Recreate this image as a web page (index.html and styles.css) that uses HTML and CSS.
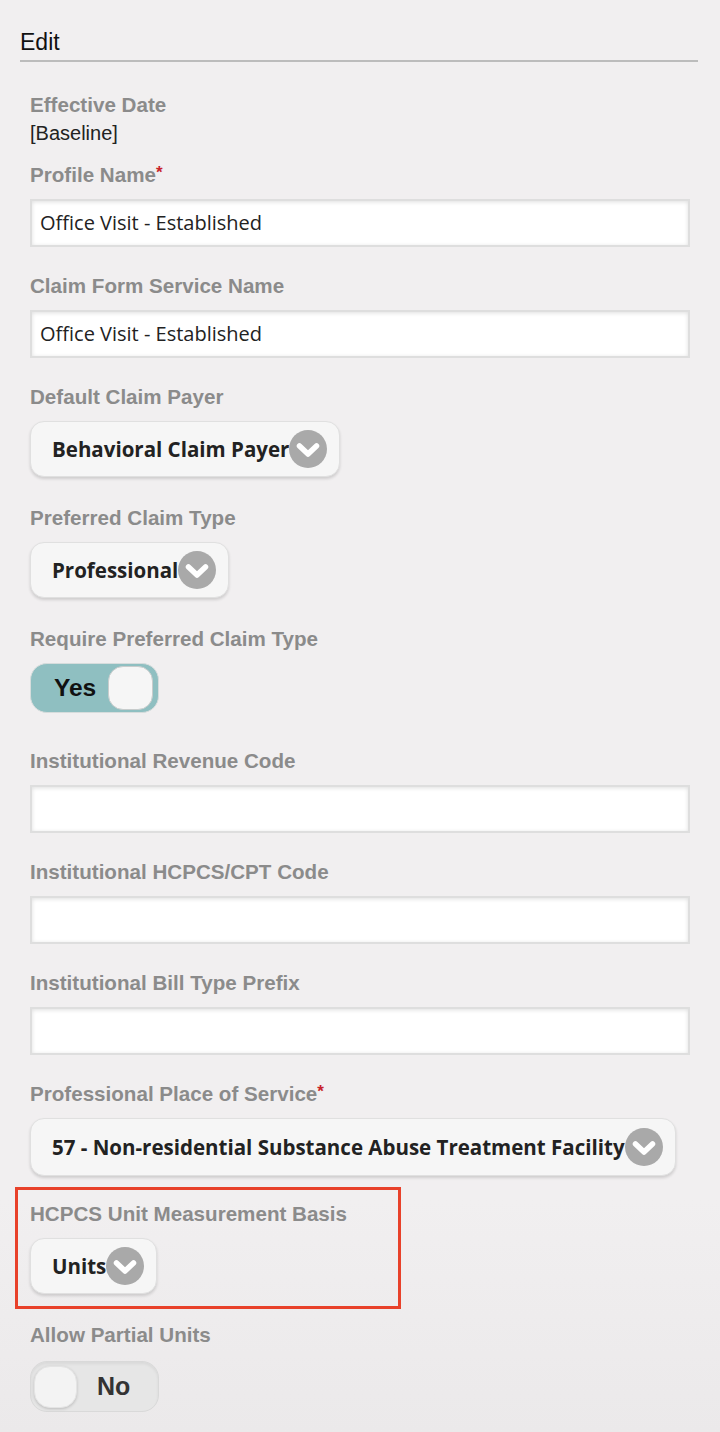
FILE: index.html
```html
<!DOCTYPE html>
<html lang="en">
<head>
<meta charset="utf-8">
<title>Edit</title>
<link rel="stylesheet" href="styles.css">
</head>
<body>
<div class="page">
  <div class="header">Edit</div>
  <div class="form">
    <div class="field field-static">
      <div class="label">Effective Date</div>
      <div class="static">[Baseline]</div>
    </div>

    <div class="field field-input">
      <div class="label">Profile Name<span class="req">*</span></div>
      <div class="input">Office Visit - Established</div>
    </div>

    <div class="field field-input">
      <div class="label">Claim Form Service Name</div>
      <div class="input">Office Visit - Established</div>
    </div>

    <div class="field field-select">
      <div class="label">Default Claim Payer</div>
      <div class="select"><span class="select-text">Behavioral Claim Payer</span><svg class="chev" viewBox="0 0 38 38" width="38" height="38"><circle cx="19" cy="19" r="19" fill="#a9a9a9"/><polyline points="10.5,16 19,24 27.5,16" fill="none" stroke="#fff" stroke-width="5.5" stroke-linecap="round" stroke-linejoin="round"/></svg></div>
    </div>

    <div class="field field-select">
      <div class="label">Preferred Claim Type</div>
      <div class="select"><span class="select-text">Professional</span><svg class="chev" viewBox="0 0 38 38" width="38" height="38"><circle cx="19" cy="19" r="19" fill="#a9a9a9"/><polyline points="10.5,16 19,24 27.5,16" fill="none" stroke="#fff" stroke-width="5.5" stroke-linecap="round" stroke-linejoin="round"/></svg></div>
    </div>

    <div class="field field-toggle">
      <div class="label">Require Preferred Claim Type</div>
      <div class="toggle toggle-on"><span class="toggle-text">Yes</span><span class="knob"></span></div>
    </div>

    <div class="field field-input">
      <div class="label">Institutional Revenue Code</div>
      <div class="input"></div>
    </div>

    <div class="field field-input">
      <div class="label">Institutional HCPCS/CPT Code</div>
      <div class="input"></div>
    </div>

    <div class="field field-input">
      <div class="label">Institutional Bill Type Prefix</div>
      <div class="input"></div>
    </div>

    <div class="field field-select field-pos">
      <div class="label">Professional Place of Service<span class="req">*</span></div>
      <div class="select select-tall"><span class="select-text">57 - Non-residential Substance Abuse Treatment Facility</span><svg class="chev" viewBox="0 0 38 38" width="38" height="38"><circle cx="19" cy="19" r="19" fill="#a9a9a9"/><polyline points="10.5,16 19,24 27.5,16" fill="none" stroke="#fff" stroke-width="5.5" stroke-linecap="round" stroke-linejoin="round"/></svg></div>
    </div>

    <div class="field field-select highlight">
      <div class="label">HCPCS Unit Measurement Basis</div>
      <div class="select"><span class="select-text">Units</span><svg class="chev" viewBox="0 0 38 38" width="38" height="38"><circle cx="19" cy="19" r="19" fill="#a9a9a9"/><polyline points="10.5,16 19,24 27.5,16" fill="none" stroke="#fff" stroke-width="5.5" stroke-linecap="round" stroke-linejoin="round"/></svg></div>
    </div>

    <div class="field field-toggle field-last">
      <div class="label">Allow Partial Units</div>
      <div class="toggle toggle-off"><span class="knob"></span><span class="toggle-text">No</span></div>
    </div>
  </div>
</div>
</body>
</html>
```

FILE: styles.css
```css
html, body {
  margin: 0;
  padding: 0;
}

body {
  background: linear-gradient(to bottom, #f1eff0 0, #f1eff0 1200px, #ebe9ea 1432px);
  min-height: 1432px;
  font-family: "Liberation Sans", Arial, Helvetica, sans-serif;
  color: #222;
}

.page {
  width: 720px;
}

.header {
  margin-left: 20px;
  width: 678px;
  padding-top: 28px;
  padding-bottom: 4px;
  font-size: 23px;
  line-height: 28px;
  color: #111;
  border-bottom: 2px solid #bcbcbc;
}

.form {
  padding: 31px 0 0 30px;
}

.field {
  display: flex;
  flex-direction: column;
  align-items: flex-start;
  position: relative;
}

.label {
  font-size: 20.6px;
  line-height: 24px;
  font-weight: bold;
  color: #8b8b8b;
}

.req {
  color: #c8232c;
  font-size: 17px;
  vertical-align: top;
  line-height: 20px;
}

.field-static {
  margin-bottom: 19px;
}

.static {
  margin-top: 5px;
  font-size: 20px;
  line-height: 22px;
  color: #222;
}

.field-input {
  margin-bottom: 27px;
}

.field-input .label,
.field-select .label,
.field-toggle .label {
  margin-bottom: 12px;
}

.field-last .label {
  margin-bottom: 14px;
}

.input {
  box-sizing: border-box;
  width: 660px;
  height: 48px;
  background: #fff;
  border: 2px solid #dedede;
  box-shadow: inset 0 1px 4px rgba(0, 0, 0, 0.13);
  padding-left: 8px;
  font-family: "Open Sans", "Liberation Sans", sans-serif;
  font-size: 20px;
  line-height: 44px;
  color: #222;
}

.field-select {
  margin-bottom: 29px;
}

.field-pos {
  margin-bottom: 26px;
}

.select {
  box-sizing: border-box;
  display: inline-flex;
  align-items: center;
  height: 56px;
  padding: 0 12px 0 21px;
  background: #f6f6f6;
  border: 1px solid #e0e0e0;
  border-radius: 14px;
  box-shadow: 0 2px 3px rgba(0, 0, 0, 0.14);
}

.select-tall {
  height: 58px;
}

.select-text {
  font-family: "Open Sans", "Liberation Sans", sans-serif;
  font-weight: bold;
  font-size: 20.5px;
  color: #222;
  white-space: nowrap;
}

.chev {
  display: block;
  flex: none;
}

.field-toggle {
  margin-bottom: 36px;
}

.toggle {
  box-sizing: border-box;
  display: flex;
  align-items: center;
  width: 129px;
  height: 50px;
  border-radius: 17px;
}

.toggle-on {
  background: #8fbfc1;
  border: 1px solid #d6dcdc;
  padding: 0 5px 0 23px;
  justify-content: space-between;
}

.toggle-off {
  height: 51px;
  background: #e6e6e6;
  border: 1px solid #d9d9d9;
  box-shadow: inset 0 2px 3px rgba(0, 0, 0, 0.06);
  padding: 0 0 0 3px;
}

.toggle-text {
  font-weight: bold;
  font-size: 24.5px;
  color: #111;
}

.toggle-off .toggle-text {
  font-size: 25px;
  color: #333;
  margin-left: 20px;
}

.knob {
  box-sizing: border-box;
  display: block;
  background: #f6f6f6;
  border-radius: 15px;
}

.toggle-on .knob {
  width: 45px;
  height: 44px;
  border: 1px solid #c8cccc;
}

.toggle-off .knob {
  width: 43px;
  height: 42px;
  background: #f3f3f3;
  border: 1px solid #e4e4e4;
  box-shadow: 0 1px 3px rgba(0, 0, 0, 0.18);
  border-radius: 16px;
}

.highlight::after {
  content: "";
  position: absolute;
  left: -15px;
  top: -15px;
  width: 380px;
  height: 116px;
  border: 3px solid #e8412a;
  pointer-events: none;
}
```
